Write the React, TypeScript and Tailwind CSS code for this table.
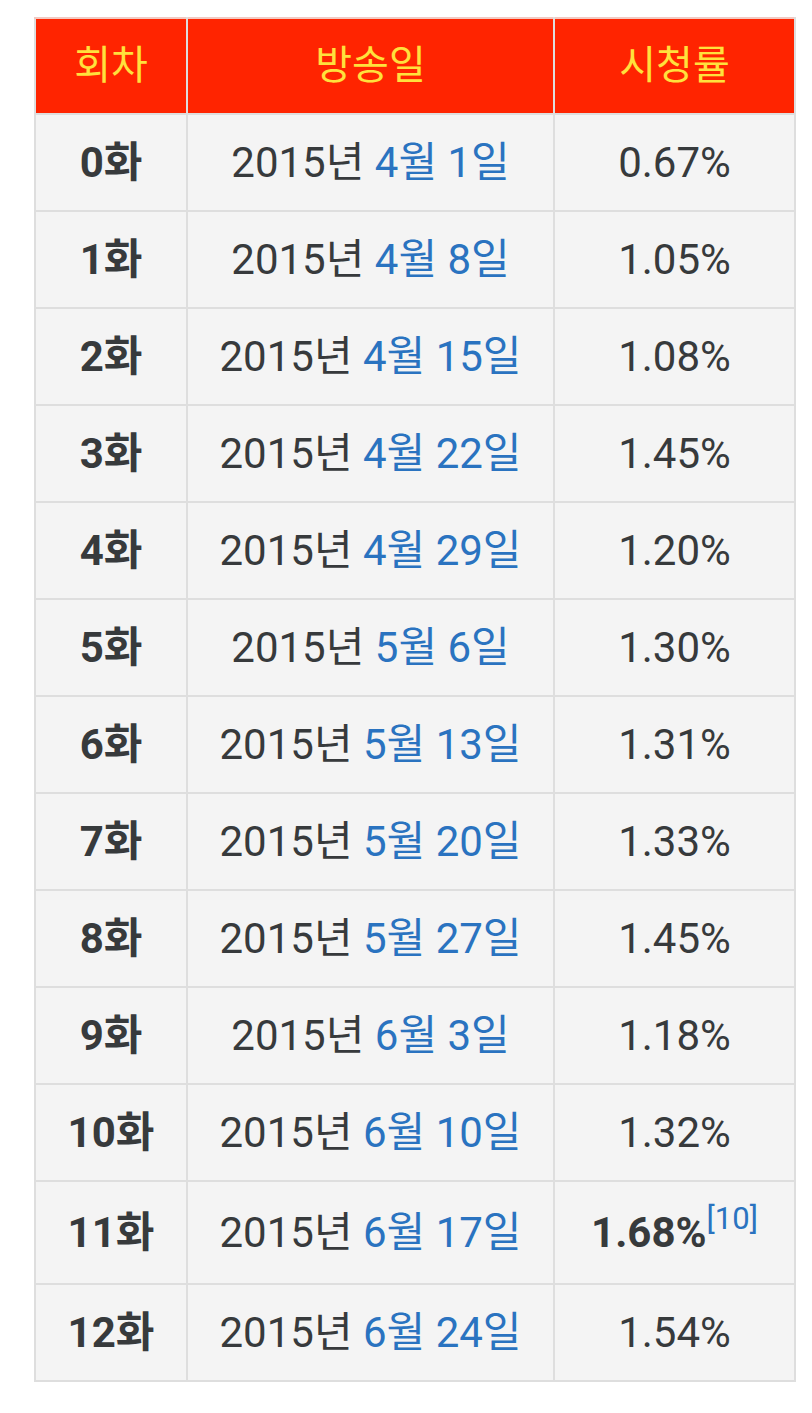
const rows = [
  { ep: "0화", m: "4월", d: "1일", rate: "0.67%" },
  { ep: "1화", m: "4월", d: "8일", rate: "1.05%" },
  { ep: "2화", m: "4월", d: "15일", rate: "1.08%" },
  { ep: "3화", m: "4월", d: "22일", rate: "1.45%" },
  { ep: "4화", m: "4월", d: "29일", rate: "1.20%" },
  { ep: "5화", m: "5월", d: "6일", rate: "1.30%" },
  { ep: "6화", m: "5월", d: "13일", rate: "1.31%" },
  { ep: "7화", m: "5월", d: "20일", rate: "1.33%" },
  { ep: "8화", m: "5월", d: "27일", rate: "1.45%" },
  { ep: "9화", m: "6월", d: "3일", rate: "1.18%" },
  { ep: "10화", m: "6월", d: "10일", rate: "1.32%" },
  { ep: "11화", m: "6월", d: "17일", rate: "1.68%", best: true },
  { ep: "12화", m: "6월", d: "24일", rate: "1.54%" },
]

export default function App() {
  return (
    <div
      className="min-h-[1413px] bg-white pt-[17px] pl-[34px]"
      style={{ fontFamily: 'Roboto, "Noto Sans CJK KR", sans-serif' }}
    >
      <table className="border-collapse text-[42px] leading-none text-[#373a3c]">
        <thead>
          <tr className="h-[96px] bg-[#ff2400] text-[40px] text-[#ffe13d]">
            <th className="w-[152px] border-2 border-[#dedede] border-t-[#f2c9c2] font-normal">회차</th>
            <th className="w-[367px] border-2 border-[#dedede] border-t-[#f2c9c2] font-normal">방송일</th>
            <th className="w-[241px] border-2 border-[#dedede] border-t-[#f2c9c2] font-normal">시청률</th>
          </tr>
        </thead>
        <tbody className="bg-[#f4f4f4]">
          {rows.map((r) => (
            <tr key={r.ep} className={r.best ? "h-[103px]" : "h-[97px]"}>
              <td className="border-2 border-[#dedede] text-center font-bold">{r.ep}</td>
              <td className="border-2 border-[#dedede] text-center">
                2015년 <span className="text-[#2a73c0]">{r.m}</span>{" "}
                <span className="text-[#2a73c0]">{r.d}</span>
              </td>
              <td className="border-2 border-[#dedede] text-center">
                {r.best ? (
                  <>
                    <b>{r.rate}</b>
                    <sup className="relative -top-[18px] text-[31px] text-[#2a73c0]">[10]</sup>
                  </>
                ) : (
                  r.rate
                )}
              </td>
            </tr>
          ))}
        </tbody>
      </table>
    </div>
  )
}
